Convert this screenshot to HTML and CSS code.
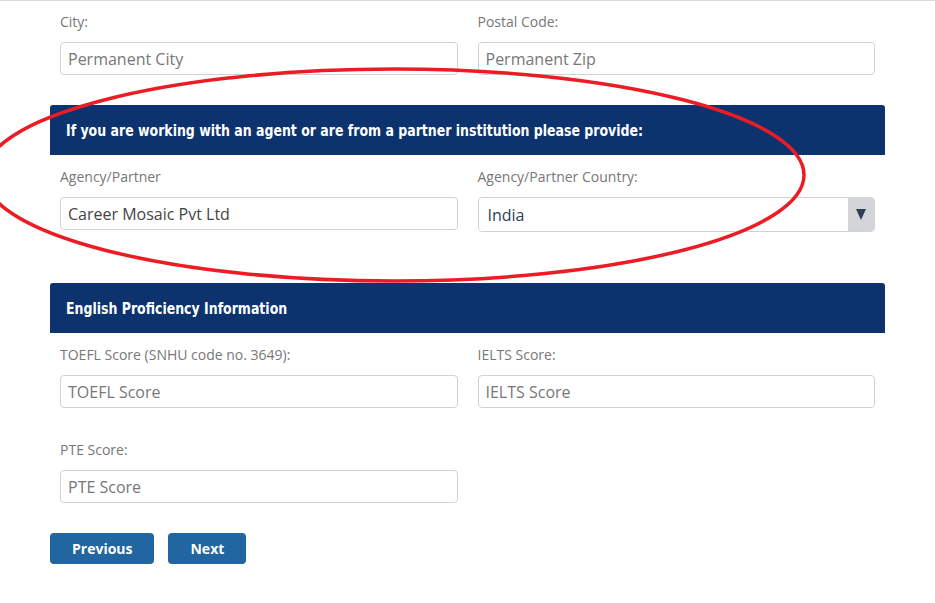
FILE: index.html
```html
<!DOCTYPE html>
<html lang="en">
<head>
    <meta charset="UTF-8">
    <meta name="viewport" content="width=device-width, initial-scale=1.0">
    <title>Application - Contact Information</title>
    <link rel="stylesheet" href="styles.css">
</head>
<body>
    <div class="page">
        <form class="app-form">
            <div class="form-row first">
                <div class="field">
                    <label for="city">City:</label>
                    <input id="city" type="text" placeholder="Permanent City">
                </div>
                <div class="field">
                    <label for="zip">Postal Code:</label>
                    <input id="zip" type="text" placeholder="Permanent Zip">
                </div>
            </div>

            <div class="section">
                <h3 class="section-title"><span>If you are working with an agent or are from a partner institution please provide:</span></h3>
                <div class="form-row">
                    <div class="field">
                        <label for="agency">Agency/Partner</label>
                        <input id="agency" type="text" value="Career Mosaic Pvt Ltd">
                    </div>
                    <div class="field">
                        <label for="agencyCountry">Agency/Partner Country:</label>
                        <div class="select-box">
                            <select id="agencyCountry">
                                <option>India</option>
                                <option>Nepal</option>
                                <option>Sri Lanka</option>
                            </select>
                            <span class="select-arrow">
                                <svg width="10" height="11" viewBox="0 0 10 11"><polygon points="0,0 10,0 5,11" fill="#2e3d55"/></svg>
                            </span>
                        </div>
                    </div>
                </div>
            </div>

            <div class="section english">
                <h3 class="section-title"><span>English Proficiency Information</span></h3>
                <div class="form-row">
                    <div class="field">
                        <label for="toefl">TOEFL Score (SNHU code no. 3649):</label>
                        <input id="toefl" type="text" placeholder="TOEFL Score">
                    </div>
                    <div class="field">
                        <label for="ielts">IELTS Score:</label>
                        <input id="ielts" type="text" placeholder="IELTS Score">
                    </div>
                </div>
                <div class="form-row next-row">
                    <div class="field">
                        <label for="pte">PTE Score:</label>
                        <input id="pte" type="text" placeholder="PTE Score">
                    </div>
                </div>
            </div>

            <div class="actions">
                <button type="button" class="btn">Previous</button>
                <button type="button" class="btn">Next</button>
            </div>
        </form>

        <!-- red annotation drawn over the form -->
        <svg class="annotation" width="935" height="603" viewBox="0 0 935 603">
            <ellipse cx="394" cy="174" rx="410" ry="106" fill="none" stroke="#ec1c24" stroke-width="3.5"/>
        </svg>
    </div>
</body>
</html>
```

FILE: styles.css
```css
body {
    margin: 0;
    font-family: "Open Sans", Arial, sans-serif;
    background: #fff;
    color: #444;
}
.page {
    position: relative;
    height: 603px;
    overflow: hidden;
    border-top: 1px solid #dcdcdc;
    box-sizing: border-box;
}
.app-form {
    margin: 0 50px;
}
.form-row {
    display: grid;
    grid-template-columns: 1fr 1fr;
    gap: 20px;
    padding: 12px 10px 0;
    align-items: start;
}
.form-row.first {
    padding-top: 11px;
}
.form-row.next-row {
    padding-top: 32px;
}
.field label {
    display: block;
    font-size: 14px;
    line-height: 20px;
    color: #777;
    margin-bottom: 10px;
}
.field input {
    display: block;
    width: 100%;
    height: 33px;
    box-sizing: border-box;
    border: 1px solid #d2d2d2;
    border-radius: 4px;
    padding: 0 7px;
    font-family: "Open Sans", Arial, sans-serif;
    font-size: 16px;
    color: #444;
    outline: none;
}
.field input::placeholder {
    color: #777;
}
.select-box {
    display: flex;
    height: 35px;
    box-sizing: border-box;
    border: 1px solid #d2d2d2;
    border-radius: 4px;
    overflow: hidden;
}
.select-box select {
    flex: 1;
    border: none;
    appearance: none;
    -webkit-appearance: none;
    background: #fff;
    padding: 0 9px;
    font-family: "Open Sans", Arial, sans-serif;
    font-size: 16px;
    color: #2f4055;
    outline: none;
}
.select-arrow {
    width: 26px;
    background: #d4d5d9;
    display: flex;
    align-items: center;
    justify-content: center;
}
.section {
    margin-top: 30px;
}
.section.english {
    margin-top: 51px;
}
.section-title {
    margin: 0;
    height: 50px;
    display: flex;
    align-items: center;
    padding: 0 16px;
    background: #0c336e;
    color: #fff;
    border-radius: 3px 3px 0 0;
    font-family: "DejaVu Sans Condensed", "DejaVu Sans", Arial, sans-serif;
    font-weight: bold;
    font-size: 16px;
    white-space: nowrap;
}
.section-title span {
    display: inline-block;
    transform: scaleX(0.87);
    transform-origin: left center;
}
.actions {
    display: flex;
    gap: 14px;
    margin-top: 30px;
}
.btn {
    height: 31px;
    padding: 0 22px;
    border: none;
    border-radius: 4px;
    background: #2165a1;
    color: #fff;
    font-family: "Open Sans", Arial, sans-serif;
    font-weight: bold;
    font-size: 14px;
    cursor: pointer;
}
.btn:hover {
    background: #1b5486;
}
.annotation {
    position: absolute;
    left: 0;
    top: 0;
    pointer-events: none;
}
```
